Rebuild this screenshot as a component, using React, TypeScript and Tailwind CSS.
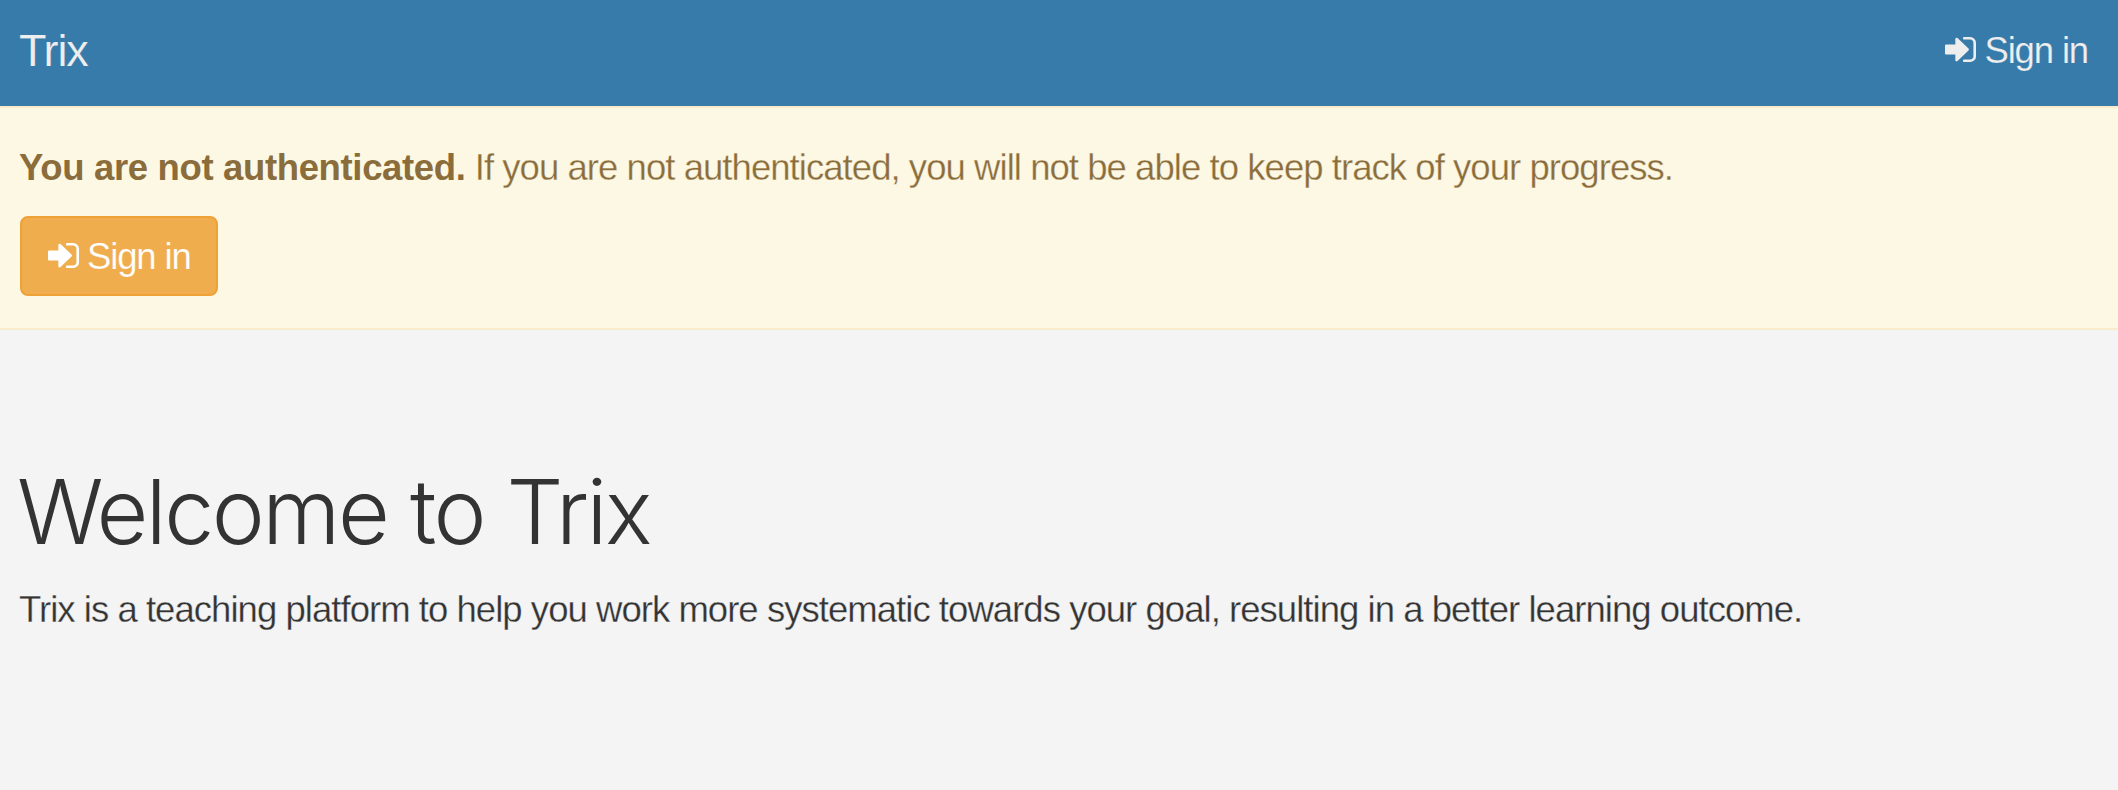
function SignInIcon() {
  return (
    <svg viewBox="0 128 1536 1280" className="h-[25px] w-[31px] shrink-0" preserveAspectRatio="none" fill="currentColor" aria-hidden="true">
      <path d="M1184 768q0 26-19 45l-544 544q-19 19-45 19t-45-19-19-45v-288H64q-26 0-45-19T0 960V576q0-26 19-45t45-19h448V224q0-26 19-45t45-19 45 19l544 544q19 19 19 45zM1536 416v704q0 119-84.500 203.500T1248 1408H928q-13 0-22.500-9.500T896 1376q0-4-1-20t-.5-26.500 3-23.500 10-19.500T928 1280h320q66 0 113-47t47-113V416q0-66-47-113t-113-47H936l-11.500-1-11.500-3-8-5.500-7-9-2-13.500q0-4-1-20t-.5-26.500 3-23.500 10-19.500T928 128h320q119 0 203.500 84.500T1536 416z" />
    </svg>
  );
}

export default function App() {
  return (
    <div className="flex h-[790px] flex-col bg-[#f4f4f4] font-['Liberation_Sans',Arial,sans-serif] whitespace-nowrap text-[#333]">
      <header className="flex h-[106px] items-start justify-between bg-[#377bab] pr-[30px] pl-[19px] text-[#eee]">
        <a href="#" className="pt-[25px] text-[45px] leading-[52px] tracking-[-1.2px] [-webkit-text-stroke:0.2px_#377bab]">Trix</a>
        <a href="#" className="flex items-start pt-[26px] text-[36.5px] leading-[50px] tracking-[-1.15px] [-webkit-text-stroke:0.2px_#377bab]">
          <span className="mr-2 pt-[11px]"><SignInIcon /></span>Sign in
        </a>
      </header>
      <section className="flex h-[224px] flex-col items-start border-y-2 border-[#faebcc] bg-[#fdf8e4] px-[19px] pt-[35px] text-[#8a6d3b]">
        <p className="text-[36.5px] leading-[50px] tracking-[-0.95px] [-webkit-text-stroke:0.3px_#fdf8e4]">
          <strong className="font-bold tracking-[-0.35px] [-webkit-text-stroke:0]">You are not authenticated.</strong> If you are not authenticated, you will not be able to keep track of your progress.
        </p>
        <button className="mt-[23px] ml-px flex h-[80px] w-[198px] items-start rounded-lg border-2 border-[#eea236] bg-[#f0ad4e] pt-[14px] pl-[26px] text-[36.5px] leading-[50px] tracking-[-1.15px] text-white [-webkit-text-stroke:0.2px_#f0ad4e]">
          <span className="mr-2 pt-[11px]"><SignInIcon /></span>Sign in
        </button>
      </section>
      <main className="px-[19px] pt-[132px]">
        <h1 className="-ml-0.5 font-['Inter',sans-serif] text-[89.5px] leading-[100px] font-light tracking-[-2.5px]">Welcome to Trix</h1>
        <p className="mt-[23px] text-[36.5px] leading-[50px] tracking-[-0.96px] [-webkit-text-stroke:0.3px_#f4f4f4]">Trix is a teaching platform to help you work more systematic towards your goal, resulting in a better learning outcome.</p>
      </main>
    </div>
  );
}
